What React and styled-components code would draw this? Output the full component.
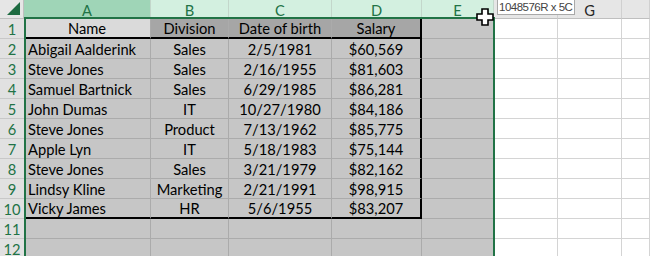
import React from "react";
import styled, { createGlobalStyle } from "styled-components";

const GlobalStyle = createGlobalStyle`
  body {
    margin: 0;
    background: #ffffff;
    overflow: hidden;
  }
`;

const Sheet = styled.div`
  position: relative;
  display: grid;
  grid-template-columns: 24px 127px 78px 103px 90px 72px 64px 64px 1fr;
  grid-template-rows: 19px;
  grid-auto-rows: 20px;
  width: 650px;
  height: 256px;
  overflow: hidden;
  font-family: Lato, "Liberation Sans", sans-serif;
  font-size: 14.7px;
  color: #000;
`;

const Corner = styled.div`
  position: relative;
  background: #e6e6e6;
  border-right: 1px solid #bfbfbf;
  border-bottom: 1px solid #bfbfbf;
  box-sizing: border-box;

  &::after {
    content: "";
    position: absolute;
    right: 3px;
    bottom: 3px;
    border-left: 13px solid transparent;
    border-bottom: 13px solid #1e6b41;
  }
`;

const ColHead = styled.div`
  box-sizing: border-box;
  display: flex;
  align-items: flex-start;
  justify-content: center;
  padding-top: 1px;
  background: ${(p) => (p.$active ? "#9fd5b7" : p.$selected ? "#d3f0e0" : "#e6e6e6")};
  color: ${(p) => (p.$selected ? "#217346" : "#262626")};
  border-right: 1px solid ${(p) => (p.$selected ? "#c3d7cb" : "#d0d0d0")};
  border-bottom: 1px solid #bfbfbf;
  font-size: 14.7px;
`;

const RowHead = styled.div`
  box-sizing: border-box;
  display: flex;
  align-items: center;
  justify-content: center;
  background: #e1e1e1;
  color: #217346;
  border-bottom: 1px solid #c8c8c8;
  font-size: 14.7px;
`;

const Cell = styled.div`
  box-sizing: border-box;
  display: flex;
  align-items: center;
  justify-content: ${(p) => (p.$left ? "flex-start" : "center")};
  padding-left: ${(p) => (p.$left ? "4px" : "0")};
  white-space: nowrap;
  overflow: hidden;
  background: ${(p) => p.$fill};
  border-right: ${(p) => (p.$thickRight ? "2px solid #000" : `1px solid ${p.$grid}`)};
  border-bottom: ${(p) => (p.$thickBottom ? "2px solid #000" : `1px solid ${p.$grid}`)};
`;

// selection frame drawn over the cells
const Selection = styled.div`
  position: absolute;
  left: 24px;
  top: 17px;
  width: 471px;
  height: 260px;
  box-sizing: border-box;
  border: 2px solid #217346;
  border-bottom: none;
  pointer-events: none;
`;

const Tip = styled.div`
  position: absolute;
  left: 497px;
  top: -1px;
  width: 78px;
  height: 16px;
  box-sizing: border-box;
  background: #fff;
  border: 1px solid #a8a8a8;
  display: flex;
  align-items: center;
  padding-left: 1px;
  font-family: "Liberation Sans", Arial, sans-serif;
  font-size: 11.5px;
  letter-spacing: -0.5px;
  color: #444;
  white-space: nowrap;
`;

const Cursor = styled.svg`
  position: absolute;
  left: 476px;
  top: 8px;
`;

const header = ["Name", "Division", "Date of birth", "Salary"];
const data = [
  ["Abigail Aalderink", "Sales", "2/5/1981", "$60,569"],
  ["Steve Jones", "Sales", "2/16/1955", "$81,603"],
  ["Samuel Bartnick", "Sales", "6/29/1985", "$86,281"],
  ["John Dumas", "IT", "10/27/1980", "$84,186"],
  ["Steve Jones", "Product", "7/13/1962", "$85,775"],
  ["Apple Lyn", "IT", "5/18/1983", "$75,144"],
  ["Steve Jones", "Sales", "3/21/1979", "$82,162"],
  ["Lindsy Kline", "Marketing", "2/21/1991", "$98,915"],
  ["Vicky James", "HR", "5/6/1955", "$83,207"],
];

// F is hidden under the tooltip in the screenshot
const letters = ["A", "B", "C", "D", "E", "", "G", ""];

const SEL = "#c6c6c6";
const SEL_GRID = "#ababab";
const GRID = "#d4d4d4";

function renderRow(n, values) {
  const isHeader = n === 1;
  const isLast = n === 10;
  const inTable = n <= 10;
  const cells = [<RowHead key="h">{n}</RowHead>];
  for (let c = 0; c < 5; c++) {
    let fill = SEL;
    if (isHeader) fill = c === 0 ? "#dadada" : c < 4 ? "#a6a6a6" : SEL;
    cells.push(
      <Cell
        key={c}
        $fill={fill}
        $grid={SEL_GRID}
        $left={!isHeader && c === 0}
        $thickRight={inTable && c === 3}
        $thickBottom={(isHeader || isLast) && c < 4}
      >
        {values ? values[c] : ""}
      </Cell>
    );
  }
  for (let c = 5; c < 8; c++) {
    cells.push(<Cell key={c} $fill="#fff" $grid={GRID} />);
  }
  return cells;
}

export default function App() {
  const rows = [];
  rows.push(...renderRow(1, header));
  data.forEach((d, i) => rows.push(...renderRow(i + 2, d)));
  rows.push(...renderRow(11));
  rows.push(...renderRow(12));

  return (
    <>
      <GlobalStyle />
      <Sheet>
        <Corner />
        {letters.map((l, i) => (
          <ColHead key={i} $selected={i < 5} $active={i === 0}>
            {l}
          </ColHead>
        ))}
        {rows}
        <Selection />
        <Tip>1048576R x 5C</Tip>
        <Cursor width="19" height="19" viewBox="0 0 19 19">
          <polygon
            points="6,1 12,1 12,6 17,6 17,12 12,12 12,17 6,17 6,12 1,12 1,6 6,6"
            fill="#fff"
            stroke="#000"
            strokeWidth="1.6"
            strokeLinejoin="miter"
          />
        </Cursor>
      </Sheet>
    </>
  );
}
